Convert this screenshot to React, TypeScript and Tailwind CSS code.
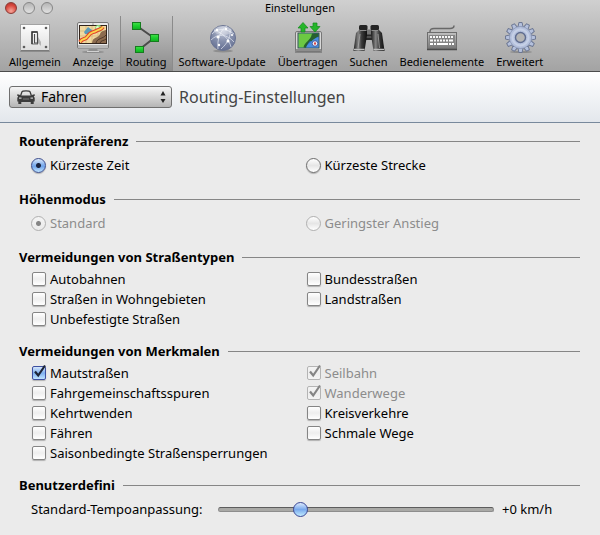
import React, { useState } from "react";

function SwitchIcon() {
  return (
    <svg width="32" height="32" viewBox="0 0 32 32" aria-hidden="true">
      <defs>
        <linearGradient id="plate" x1="0" y1="0" x2="0" y2="1">
          <stop offset="0" stopColor="#fdfdfd" />
          <stop offset="1" stopColor="#dedede" />
        </linearGradient>
      </defs>
      <rect x="1" y="29" width="30" height="2" rx="1" fill="#6f6f6f" opacity=".55" />
      <rect x="1.500" y="3.500" width="29" height="26" fill="url(#plate)" stroke="#a2a2a2" />
      <path d="M2 29.500h28" stroke="#7b7b7b" />
      <g fill="#5e5e5e">
        <circle cx="5" cy="7" r="1.300" />
        <circle cx="27" cy="7" r="1.300" />
        <circle cx="5" cy="26" r="1.300" />
        <circle cx="27" cy="26" r="1.300" />
      </g>
      <path d="M18 21l4 4v-4l-3-5z" fill="#b4b4b4" />
      <rect x="13" y="11" width="5.500" height="12" fill="#fff" stroke="#6b6b6b" />
      <path d="M13 23V11h5.500" fill="none" stroke="#333" strokeWidth="1.400" />
      <path d="M15.500 13v9h3v-10" fill="#f8f8f8" stroke="#4a4a4a" strokeWidth="1.200" />
    </svg>
  );
}

function DisplayIcon() {
  return (
    <svg width="32" height="32" viewBox="0 0 32 32" aria-hidden="true">
      <ellipse cx="16" cy="31" rx="11" ry="1" fill="#555" opacity=".4" />
      <path d="M12 27h8l1 4H11z" fill="#8f8f8f" />
      <path d="M10 30.500h12" stroke="#d2d2d2" />
      <rect x=".5" y="1.500" width="31" height="26" rx="1.500" fill="#e9e9e9" stroke="#777" />
      <path d="M1 24h30v2.500a1 1 0 0 1-1 1H2a1 1 0 0 1-1-1z" fill="#b8b8b8" />
      <rect x="2" y="4" width="28" height="19" fill="#33251c" />
      <rect x="3" y="5" width="26" height="17" fill="#f2d9a0" />
      <path d="M3 10h26M3 15h26M9 5v17M15 5v17M21 5v17" stroke="#d1b477" strokeWidth=".7" />
      <path d="M7 11l4-5 4 3-1 4H8z" fill="#5d9cb8" />
      <path d="M15 22c1-7 6-4 8-9 1-3 3-3 6-4v13z" fill="#8c6b4e" />
      <path d="M19 22c1-5 7-4 10-8M23 22c1-3 4-2 6-4" fill="none" stroke="#4d382a" />
      <circle cx="21.500" cy="7.500" r="3.500" fill="#8fdc78" />
      <circle cx="20.500" cy="6.500" r="1.500" fill="#e0fcd3" />
      <path d="M3 21c3-5 5-1 8-6s5-3 8-5 5-1 7-4" fill="none" stroke="#e2442b" strokeWidth="4" />
      <path d="M3 21c3-5 5-1 8-6s5-3 8-5 5-1 7-4" fill="none" stroke="#fbd64b" strokeWidth="1.800" />
      <circle cx="16" cy="3" r=".6" fill="#444" />
    </svg>
  );
}

function RouteIcon() {
  return (
    <svg width="32" height="32" viewBox="0 0 32 32" aria-hidden="true">
      <defs>
        <linearGradient id="node" x1="0" y1="0" x2="0" y2="1">
          <stop offset="0" stopColor="#45e04b" />
          <stop offset=".5" stopColor="#19cf2c" />
          <stop offset="1" stopColor="#12ad22" />
        </linearGradient>
      </defs>
      <path d="M7 5l17 12L10 28" fill="none" stroke="#4b4b4b" strokeWidth="2" />
      <g fill="url(#node)" stroke="#157c1e">
        <rect x="2.500" y="1.500" width="8" height="7" />
        <rect x="20.500" y="13.500" width="8" height="7" />
        <rect x="5.500" y="25.500" width="8" height="6" />
      </g>
    </svg>
  );
}

function GlobeIcon() {
  return (
    <svg width="32" height="32" viewBox="0 0 32 32" aria-hidden="true">
      <defs>
        <radialGradient id="globe" cx=".5" cy=".2" r=".85">
          <stop offset="0" stopColor="#c9cfde" />
          <stop offset=".5" stopColor="#8791ad" />
          <stop offset="1" stopColor="#5f6a8e" />
        </radialGradient>
      </defs>
      <ellipse cx="17" cy="30" rx="10" ry="1.500" fill="#666" opacity=".45" />
      <circle cx="17" cy="17" r="12.500" fill="url(#globe)" stroke="#6a7493" />
      <path d="M6 13c5-6 14-6 22 0M5 19c7-7 16-6 23 2M12 28C11 19 14 9 21 5M8 9c9 3 15 9 17 17M24 8c1 7-2 14-9 20" fill="none" stroke="#e8ecf5" strokeWidth=".7" />
      <g fill="#fff">
        <circle cx="11" cy="9" r="1.200" />
        <circle cx="20" cy="8" r="1.200" />
        <circle cx="12" cy="16" r="1.500" />
        <circle cx="22" cy="20" r="1.500" />
        <circle cx="13" cy="24" r="1.200" />
        <circle cx="26" cy="14" r="1.100" />
      </g>
      <ellipse cx="17" cy="9.500" rx="9" ry="4.500" fill="#fff" opacity=".28" />
    </svg>
  );
}

function TransferIcon() {
  return (
    <svg width="32" height="32" viewBox="0 0 32 32" aria-hidden="true">
      <path d="M3 31h27" stroke="#555" strokeWidth="2" opacity=".45" />
      <rect x="3.500" y="10.500" width="26" height="20" rx="1.500" fill="#d8d8d8" stroke="#777" />
      <path d="M4 28h25v2H4z" fill="#8d8d8d" />
      <rect x="6" y="12" width="21" height="15" fill="#2d67c4" stroke="#3b4f45" />
      <path d="M6.500 12.500h15c0 4-2 3-4 6s-4 4-5 8h-6z" fill="#6cc843" />
      <path d="M20 12.500h6.500v3c-4 1-4 5-7 5-2-2-4 3-5 6h-3c1-6 7-6 8.500-14z" fill="#27612f" />
      <path d="M19 21c2-3 5-4 7.500-5v10.500H14c1-3 3-4 5-5.500z" fill="#4a8ede" />
      <circle cx="23" cy="22.500" r="2.800" fill="#e8eefc" stroke="#334b8e" strokeWidth=".8" />
      <path d="M23 20.500l1 2-1 2-1-2z" fill="#d8342b" />
      <g fill="#25b62a" stroke="#128a1b" strokeWidth=".7">
        <path d="M11 1.500l5 5.500h-3v4H9V7H6z" />
        <path d="M23 11l5-5.500h-3V2h-4v3.500h-3z" />
      </g>
    </svg>
  );
}

function BinocularsIcon() {
  return (
    <svg width="32" height="32" viewBox="0 0 32 32" aria-hidden="true">
      <defs>
        <linearGradient id="barrel" x1="0" y1="0" x2="1" y2="0">
          <stop offset="0" stopColor="#1c1c1c" />
          <stop offset=".35" stopColor="#858585" />
          <stop offset=".6" stopColor="#3b3b3b" />
          <stop offset="1" stopColor="#0f0f0f" />
        </linearGradient>
      </defs>
      <rect x="12" y="10" width="8" height="9" fill="#282828" />
      <path d="M14 9h4v4h-4zM13 16h6" fill="#777" stroke="#777" />
      <path d="M7 8h7v6l-2.500 16H.5L3 12z" fill="url(#barrel)" />
      <path d="M18 8h7l4 4 2.500 18h-11L18 14z" fill="url(#barrel)" />
      <rect x="6" y="4" width="8.500" height="5" rx="1.500" fill="#242424" />
      <rect x="17.500" y="4" width="8.500" height="5" rx="1.500" fill="#242424" />
      <path d="M7 9.500h6.500M18.500 9.500H25" stroke="#8d8d8d" />
      <path d="M1 28.500h10.500M20.500 28.500H31" stroke="#bcbcbc" strokeWidth="1.300" />
      <path d="M7 13l-2 14M25 13l1.500 14" stroke="#b0b0b0" opacity=".7" />
    </svg>
  );
}

function KeyboardIcon() {
  return (
    <svg width="32" height="32" viewBox="0 0 32 32" aria-hidden="true">
      <defs>
        <linearGradient id="board" x1="0" y1="0" x2="0" y2="1">
          <stop offset="0" stopColor="#c2c2c2" />
          <stop offset="1" stopColor="#727272" />
        </linearGradient>
      </defs>
      <path d="M4 11c0-3 1-3.500 4-3.500h16c2 0 4 0 4-3" fill="none" stroke="#686868" strokeWidth="1.500" />
      <rect x="1.500" y="11.500" width="29" height="17" fill="url(#board)" stroke="#6d6d6d" />
      <path d="M1 28.500h30" stroke="#4b4b4b" strokeWidth="1.500" />
      <rect x="3" y="14" width="26" height="11" fill="#858585" />
      <path d="M4 16h24" stroke="#f8f8f8" strokeWidth="2.200" strokeDasharray="2 1" />
      <path d="M4 19.500h24" stroke="#f8f8f8" strokeWidth="2.200" strokeDasharray="3 1 2 1 2 1 2 1 2 1 2 1 4 1" />
      <path d="M4 23h3M8 23h2M11 23h11M23 23h2M26 23h2" stroke="#fff" strokeWidth="2.200" />
    </svg>
  );
}

const TEETH = [0, 30, 60, 90, 120, 150, 180, 210, 240, 270, 300, 330];

function GearIcon() {
  return (
    <svg width="32" height="32" viewBox="0 0 32 32" aria-hidden="true">
      <ellipse cx="17" cy="31" rx="11" ry="1" fill="#555" opacity=".4" />
      <g fill="#b4c0dc" stroke="#67728f" strokeWidth=".9">
        {TEETH.map((angle) => (
          <path key={angle} d="M14 6l.9-4.500h3.200l.9 4.500z" transform={`rotate(${angle} 16.500 16.500)`} />
        ))}
      </g>
      <circle cx="16.500" cy="16.500" r="11" fill="#b4c0dc" stroke="#8995b3" strokeWidth=".6" />
      <circle cx="16.500" cy="16.500" r="8" fill="none" stroke="#c6d0e6" strokeWidth="2" />
      <circle cx="16.500" cy="16.500" r="5" fill="#b5b5b5" stroke="#5f6c8f" strokeWidth="1.400" />
    </svg>
  );
}

function CarIcon() {
  return (
    <svg width="18" height="14" viewBox="0 0 18 14" aria-hidden="true">
      <path d="M3.500 6L5 1.800C5.300 1 6 .8 9 .8s3.700.2 4 1L14.500 6" fill="none" stroke="#3c3c3c" strokeWidth="1.300" />
      <path d="M0 4.500h2l1.500 1h11l1.500-1h2v1l-1.200.500.9 2v3.500h-1V14h-3v-2H4.300v2h-3v-2.500h-1V8l.9-2L0 5.500z" fill="#3c3c3c" />
      <path d="M2 8.200h2.500M13.500 8.200H16" stroke="#c9c9c9" strokeWidth="1.300" />
      <path d="M6 9h6" stroke="#777" />
    </svg>
  );
}

const tools = [
  { label: "Allgemein", Icon: SwitchIcon },
  { label: "Anzeige", Icon: DisplayIcon },
  { label: "Routing", Icon: RouteIcon, active: true },
  { label: "Software-Update", Icon: GlobeIcon },
  { label: "Übertragen", Icon: TransferIcon },
  { label: "Suchen", Icon: BinocularsIcon },
  { label: "Bedienelemente", Icon: KeyboardIcon },
  { label: "Erweitert", Icon: GearIcon },
];

function Section({ title, children }: { title: string; children: React.ReactNode }) {
  return (
    <section>
      <div className="flex h-5 items-center gap-2">
        <h2 className="font-bold whitespace-nowrap">{title}</h2>
        <div className="h-px flex-1 bg-[#868686]" />
      </div>
      {children}
    </section>
  );
}

function Check({ label, checked = false, disabled = false }: { label: string; checked?: boolean; disabled?: boolean }) {
  const [on, setOn] = useState(checked);
  return (
    <label className={`flex h-5 items-center gap-[3px] ${disabled ? "text-[#8c8c8c]" : ""}`}>
      <span className="relative flex w-4 justify-center">
        <input
          type="checkbox"
          checked={on}
          disabled={disabled}
          onChange={() => setOn(!on)}
          className="size-[14px] appearance-none rounded-[2px] border border-[#858585] bg-linear-to-b from-white via-[#eeeeee] to-white shadow-[0_1px_1px_rgba(0,0,0,0.25)] enabled:checked:border-[#3d4fa0] enabled:checked:from-[#d5e6fb] enabled:checked:via-[#7fb0ef] enabled:checked:to-[#c0e4ff] disabled:border-[#b4b4b4] disabled:from-[#f4f4f4] disabled:to-[#f4f4f4] disabled:shadow-none"
        />
        {on && (
          <svg className="pointer-events-none absolute -top-0.5 left-0" width="16" height="16" viewBox="0 0 16 16" aria-hidden="true">
            <path d="M4 7.500l3.200 4L14 1.500" fill="none" stroke={disabled ? "#858585" : "#1d2538"} strokeWidth="2.200" />
          </svg>
        )}
      </span>
      <span>{label}</span>
    </label>
  );
}

function Radio({ name, label, checked = false, disabled = false }: { name: string; label: string; checked?: boolean; disabled?: boolean }) {
  return (
    <label className={`flex h-7 items-center gap-1 ${disabled ? "text-[#8c8c8c]" : ""}`}>
      <input
        type="radio"
        name={name}
        defaultChecked={checked}
        disabled={disabled}
        className="size-[15px] appearance-none rounded-full border border-[#6d6d6d] bg-linear-to-b from-white via-[#e6e6e6] to-white shadow-[0_1px_1px_rgba(0,0,0,0.25)] enabled:checked:border-[#3b4c8c] enabled:checked:bg-[radial-gradient(circle_at_center,#1b2440_0,#1b2440_2px,transparent_3px),linear-gradient(#dbe9fb,#6ea3ea_55%,#bfe3ff)] disabled:border-[#b0b0b0] disabled:shadow-none disabled:checked:bg-[radial-gradient(circle_at_center,#858585_0,#858585_2px,transparent_3px),linear-gradient(#f4f4f4,#eaeaea)]"
      />
      <span>{label}</span>
    </label>
  );
}

export default function App() {
  return (
    <div className="min-h-screen bg-[#ebebeb] font-['Noto_Sans','Open_Sans',sans-serif] text-[13px] leading-5 text-black">
      <header className="border-b border-[#4c4c4c] bg-linear-to-b from-[#d0d0d0] to-[#a3a3a3]">
        <div className="grid h-4 grid-cols-[1fr_auto_1fr] items-center">
          <div className="flex gap-[6px] pl-[5px]">
            <button aria-label="Schließen" className="size-3 rounded-full border border-[#8a3a35] bg-[radial-gradient(circle_at_50%_80%,#f7a79b,#d8473d_60%,#a8332c)]" />
            <button aria-label="Minimieren" className="size-3 rounded-full border border-[#868686] bg-linear-to-b from-[#b5b5b5] to-[#e2e2e2]" />
            <button aria-label="Zoomen" className="size-3 rounded-full border border-[#868686] bg-linear-to-b from-[#b5b5b5] to-[#e2e2e2]" />
          </div>
          <h1 className="text-[11px] leading-4">Einstellungen</h1>
        </div>
        <nav className="flex pl-[3px]">
          {tools.map(({ label, Icon, active }) => (
            <button
              key={label}
              className={`flex h-[55px] flex-col items-center gap-0.5 px-[6px] pt-[5px] text-[11px] leading-[14px] whitespace-nowrap ${
                active
                  ? "bg-linear-to-b from-[#c6c6c6] to-[#8c8c8c] shadow-[inset_1px_0_#8b8b8b,inset_-1px_0_#8b8b8b]"
                  : ""
              }`}
            >
              <Icon />
              <span>{label}</span>
            </button>
          ))}
        </nav>
      </header>

      <div className="flex h-[51px] items-center gap-[7px] border-b border-[#78899c] bg-linear-to-b from-white to-[#e3e7ec] pl-[9px]">
        <div className="relative">
          <select
            aria-label="Profil"
            className="block h-[22px] w-[163px] appearance-none rounded-[3px] border border-[#6f6f6f] bg-linear-to-b from-[#f6f6f6] to-[#b5b5b5] pl-[31px] text-[14px] leading-5"
          >
            <option>Fahren</option>
          </select>
          <span className="pointer-events-none absolute top-1 left-2">
            <CarIcon />
          </span>
          <svg className="pointer-events-none absolute top-[5px] right-[6px]" width="6" height="12" viewBox="0 0 6 12" aria-hidden="true">
            <path d="M.5 4.500L3 0l2.500 4.500zM.5 8L3 12l2.500-4z" fill="#222" />
          </svg>
        </div>
        <p className="text-[16px] text-[#444444]">Routing-Einstellungen</p>
      </div>

      <main className="flex flex-col gap-[10px] pt-2 pr-5 pb-3 pl-[19px]">
        <Section title="Routenpräferenz">
          <div className="grid grid-cols-2 pl-3">
            <Radio name="preference" label="Kürzeste Zeit" checked />
            <Radio name="preference" label="Kürzeste Strecke" />
          </div>
        </Section>
        <Section title="Höhenmodus">
          <div className="grid grid-cols-2 pl-3">
            <Radio name="elevation" label="Standard" checked disabled />
            <Radio name="elevation" label="Geringster Anstieg" disabled />
          </div>
        </Section>
        <Section title="Vermeidungen von Straßentypen">
          <div className="grid grid-cols-2 py-0.5 pl-3">
            <div>
              <Check label="Autobahnen" />
              <Check label="Straßen in Wohngebieten" />
              <Check label="Unbefestigte Straßen" />
            </div>
            <div>
              <Check label="Bundesstraßen" />
              <Check label="Landstraßen" />
            </div>
          </div>
        </Section>
        <Section title="Vermeidungen von Merkmalen">
          <div className="grid grid-cols-2 py-0.5 pl-3">
            <div>
              <Check label="Mautstraßen" checked />
              <Check label="Fahrgemeinschaftsspuren" />
              <Check label="Kehrtwenden" />
              <Check label="Fähren" />
              <Check label="Saisonbedingte Straßensperrungen" />
            </div>
            <div>
              <Check label="Seilbahn" checked disabled />
              <Check label="Wanderwege" checked disabled />
              <Check label="Kreisverkehre" />
              <Check label="Schmale Wege" />
            </div>
          </div>
        </Section>
        <Section title="Benutzerdefini">
          <div className="flex h-7 items-center gap-2 pl-3">
            <label htmlFor="speed" className="w-[179px] whitespace-nowrap">
              Standard-Tempoanpassung:
            </label>
            <input
              id="speed"
              type="range"
              min={-20}
              max={50}
              defaultValue={0}
              className="h-4 min-w-0 flex-1 appearance-none bg-transparent [&::-webkit-slider-runnable-track]:h-[5px] [&::-webkit-slider-runnable-track]:rounded-full [&::-webkit-slider-runnable-track]:border [&::-webkit-slider-runnable-track]:border-[#8d8d8d] [&::-webkit-slider-runnable-track]:border-t-[#5d5d5d] [&::-webkit-slider-runnable-track]:bg-[#a9a9a6] [&::-webkit-slider-thumb]:-mt-[6px] [&::-webkit-slider-thumb]:size-[15px] [&::-webkit-slider-thumb]:appearance-none [&::-webkit-slider-thumb]:rounded-full [&::-webkit-slider-thumb]:border [&::-webkit-slider-thumb]:border-[#3a4796] [&::-webkit-slider-thumb]:bg-linear-to-b [&::-webkit-slider-thumb]:from-[#dce9fc] [&::-webkit-slider-thumb]:via-[#79a9ec] [&::-webkit-slider-thumb]:to-[#c2ecff]"
            />
            <output htmlFor="speed" className="w-[78px]">
              +0 km/h
            </output>
          </div>
        </Section>
      </main>
    </div>
  );
}
